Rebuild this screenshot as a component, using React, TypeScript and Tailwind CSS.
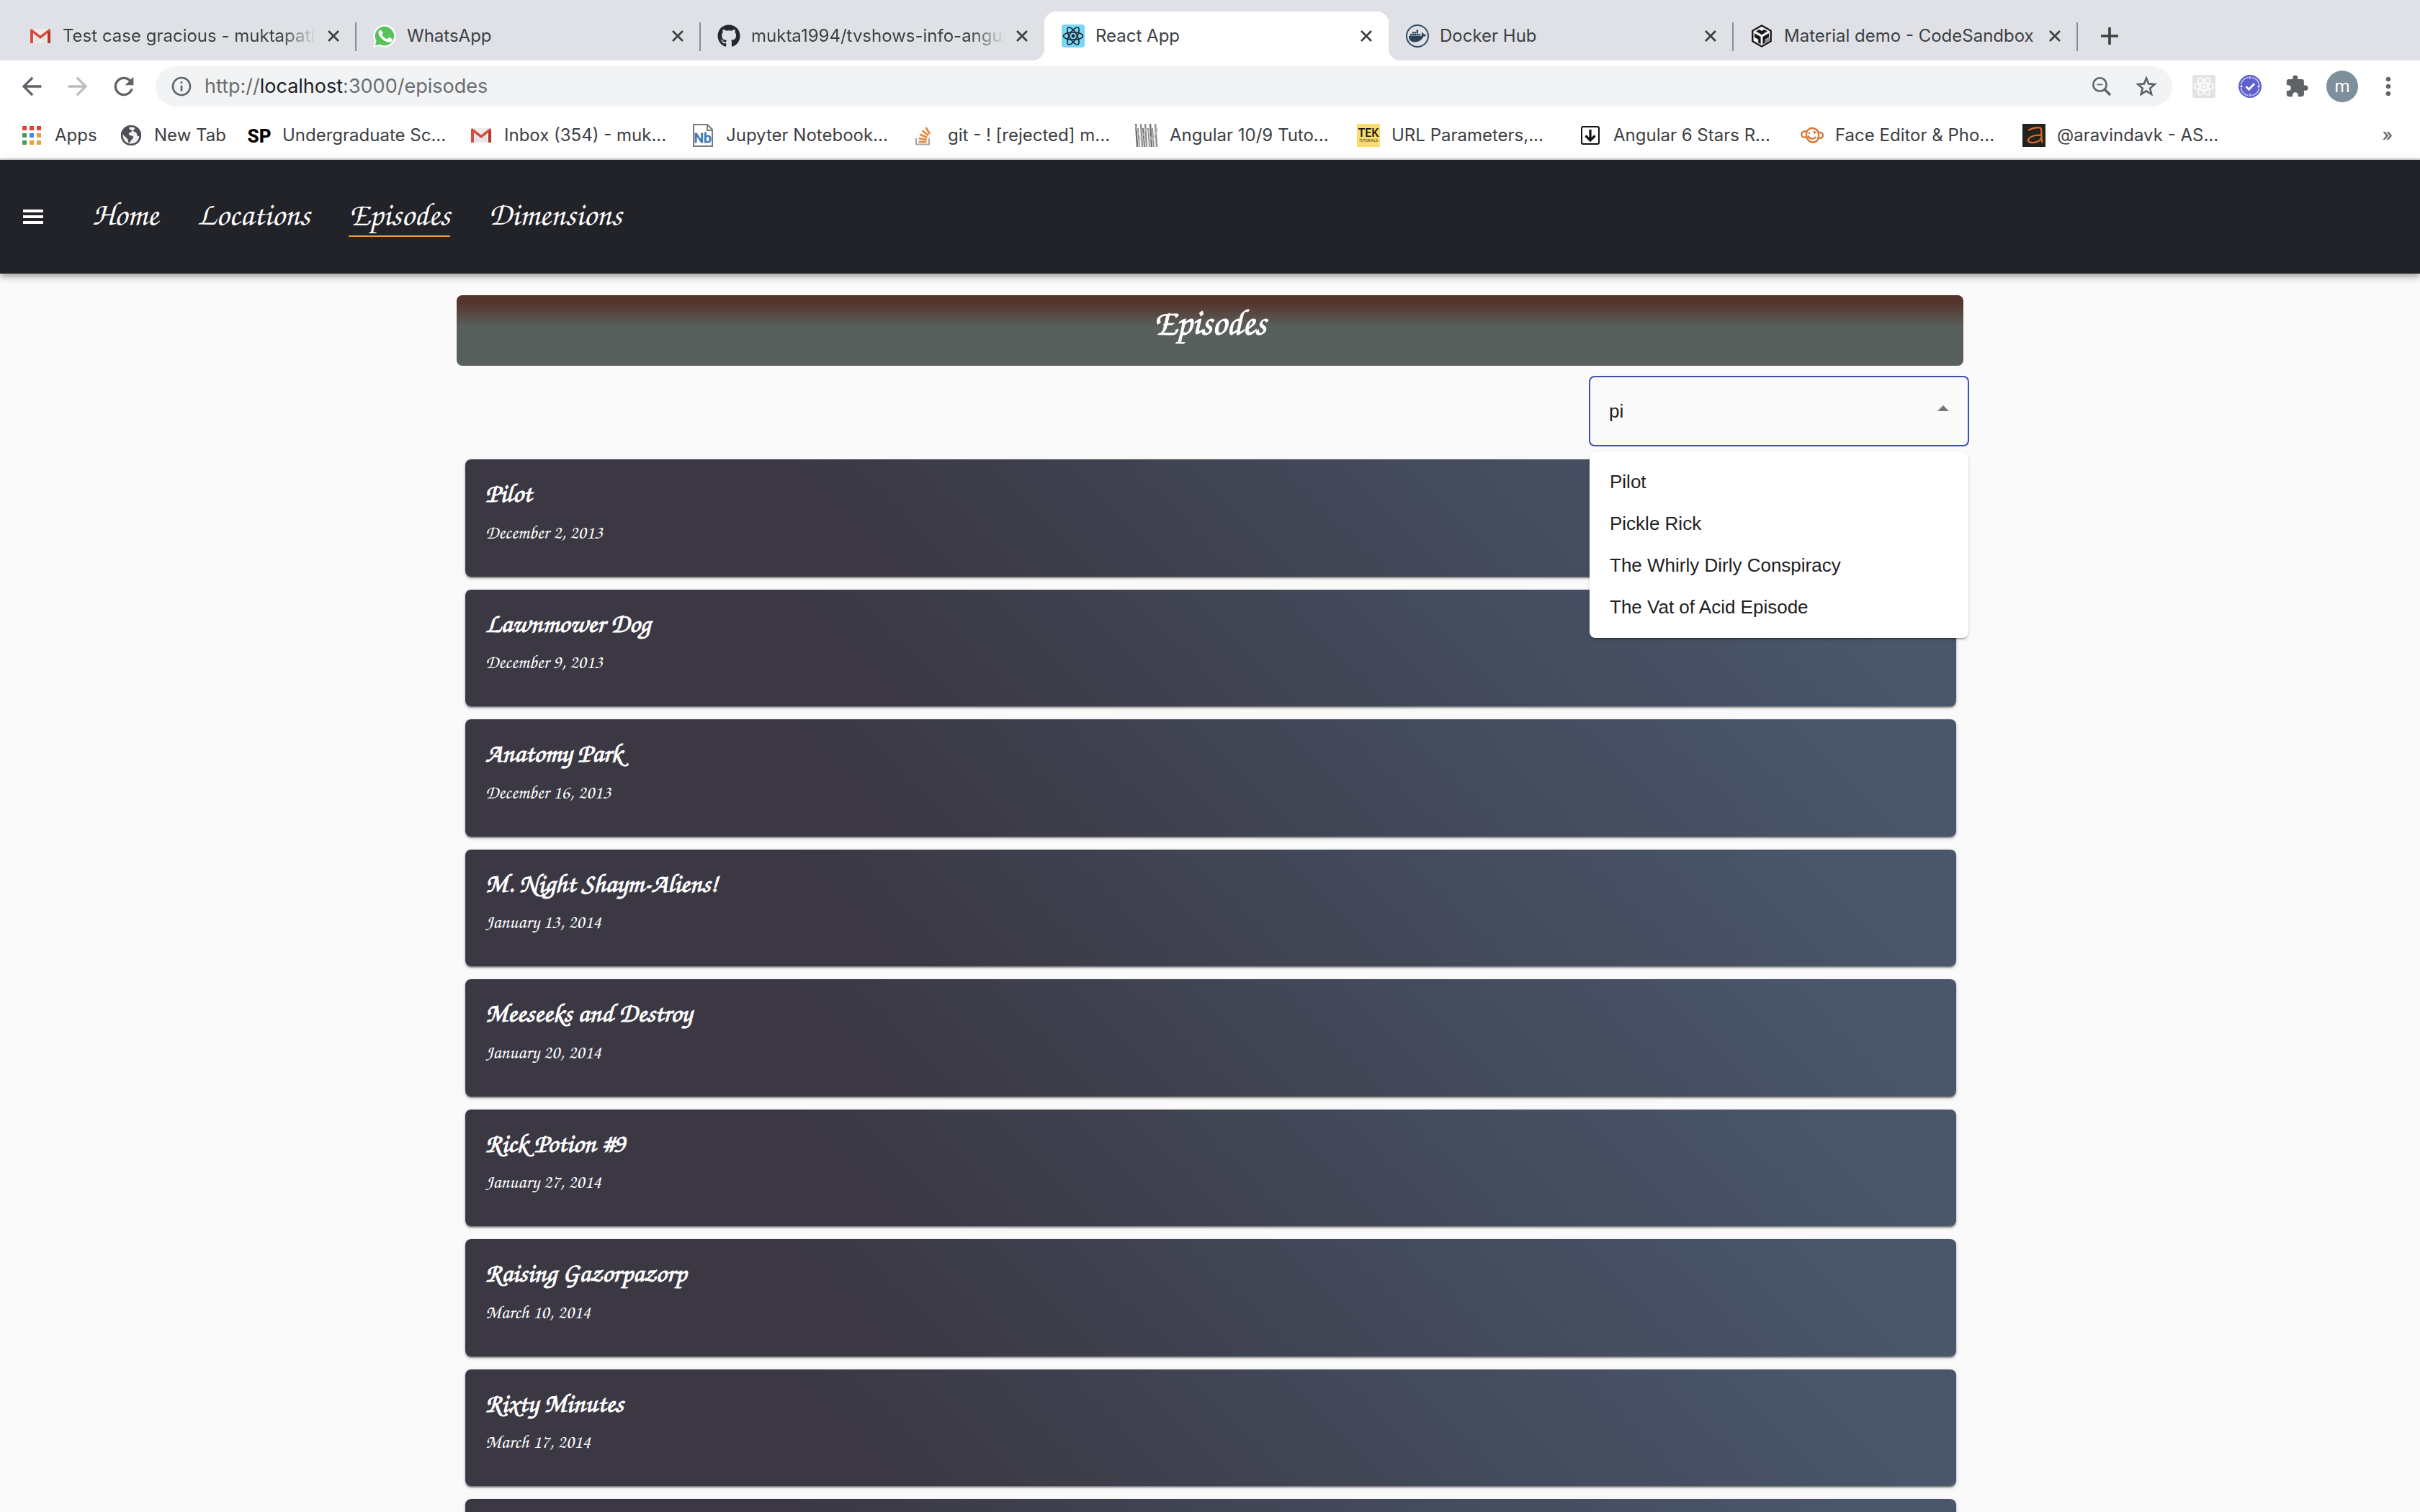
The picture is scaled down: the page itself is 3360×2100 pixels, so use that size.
import type { ReactNode } from "react";
import { FaDocker, FaGithub } from "react-icons/fa";
import {
  MdArrowBack,
  MdArrowForward,
  MdExtension,
  MdInfoOutline,
  MdMoreVert,
  MdRefresh,
} from "react-icons/md";

/* ---------- icons ---------- */

function GmailIcon() {
  return (
    <svg viewBox="0 0 32 32" className="size-8" aria-hidden="true">
      <path d="M4 6h24v20H4z" fill="#ececec" />
      <path d="M8 26 16 19l8 7z" fill="#fff" />
      <path d="M8 12v14h16V12l-8 7z" fill="#dcdcdc" opacity=".6" />
      <path d="M2 8.200a2 2 0 0 1 2-2L16 15.500 28 6.200a2 2 0 0 1 2 2V26h-4V12l-10 8L6 12v14H2z" fill="#d54b3d" />
      <path d="M26 12v14h4V8.200l-4 3.800z" fill="#b63524" />
    </svg>
  );
}

function WhatsAppIcon() {
  return (
    <svg viewBox="0 0 32 32" className="size-8" aria-hidden="true">
      <path d="M0 32 2.300 23.800A15.800 15.800 0 1 1 8.300 29.800z" fill="#fdfdfd" />
      <path d="M2.800 29.200 4.600 22.900A13.200 13.200 0 1 1 9.300 27.500z" fill="#55c25a" />
      <path
        d="M11.300 8.600c-.4-.8-.8-.8-1.200-.8-1 0-2.600 1.300-2.600 3.700 0 2.300 1.700 4.600 2 4.900.2.300 3.300 5.200 8.100 7.100 4 1.600 4.900 1.200 5.700 1.200.9-.1 2.900-1.200 3.200-2.300.4-1.200.4-2.100.3-2.300-.2-.3-.5-.4-1-.6l-3.200-1.500c-.5-.2-.8-.2-1.100.2l-1.500 1.900c-.3.300-.6.400-1 .1-.5-.2-2-.7-3.900-2.400-1.400-1.200-2.400-2.800-2.700-3.200-.2-.5 0-.7.300-1l1.200-1.500c.1-.3.200-.5.100-.9z"
        fill="#fff"
      />
    </svg>
  );
}

function Atom({ stroke, width }: { stroke: string; width: number }) {
  return (
    <g fill="none" stroke={stroke} strokeWidth={width}>
      <ellipse cx="16" cy="16" rx="13.500" ry="5.200" />
      <ellipse cx="16" cy="16" rx="13.500" ry="5.200" transform="rotate(60 16 16)" />
      <ellipse cx="16" cy="16" rx="13.500" ry="5.200" transform="rotate(120 16 16)" />
      <circle cx="16" cy="16" r="2.400" fill={stroke} stroke="none" />
    </g>
  );
}

function ReactIcon() {
  return (
    <svg viewBox="0 0 32 32" className="size-8" aria-hidden="true">
      <rect width="32" height="32" rx="4" fill="#7ad7f8" />
      <Atom stroke="#23272f" width={1.7} />
    </svg>
  );
}

function ReactToolsIcon() {
  return (
    <svg viewBox="0 0 32 32" className="size-8" aria-hidden="true">
      <rect width="32" height="32" rx="3" fill="#e3e3e3" />
      <Atom stroke="#fbfbfb" width={1.8} />
      <circle cx="16" cy="16" r="4.500" fill="none" stroke="#fbfbfb" strokeWidth="1.200" />
    </svg>
  );
}

function DockerIcon() {
  return (
    <span className="grid size-8 place-items-center rounded-full border-2 border-[#2f4a5f] text-[#2a4258]">
      <FaDocker className="size-6" aria-hidden="true" />
    </span>
  );
}

function CodeSandboxIcon() {
  return (
    <svg viewBox="0 0 32 32" className="size-8" aria-hidden="true">
      <path d="M16 1.500 28.700 8.800v14.400L16 30.500 3.300 23.200V8.800z" fill="#f4f4f4" stroke="#17181a" strokeWidth="2.400" strokeLinejoin="round" />
      <path d="M8 9.500 12.500 7l3.500 2 3.500-2L24 9.500l-8 4.700z" fill="#17181a" />
      <path d="M6 12.200 14.600 17v10.300l-3.400-2v-4.600L6 17.800z" fill="#17181a" />
      <path d="M26 12.200 17.400 17v10.300l3.400-2v-4.600l5.200-2.900z" fill="#17181a" />
      <path d="m20.800 21.500 6-3.500v4.500l-6 3.400z" fill="#8b8d90" />
    </svg>
  );
}

function AppsIcon() {
  const dots = ["#e34133", "#e34133", "#e34133", "#449c58", "#4285f4", "#e9a23b", "#449c58", "#e9a23b", "#e9a23b"];
  return (
    <svg viewBox="0 0 32 32" className="size-8" aria-hidden="true">
      {dots.map((fill, i) => (
        <rect key={i} x={3 + (i % 3) * 10} y={3 + Math.floor(i / 3) * 10} width="6" height="6" fill={fill} />
      ))}
    </svg>
  );
}

function GlobeIcon() {
  return (
    <svg viewBox="0 0 32 32" className="size-8" aria-hidden="true">
      <circle cx="16" cy="16" r="14" fill="#4e5156" />
      <path d="M13.500 4.500c-1 2 .5 3.500 2.500 4 2.500.6 1.500 2.500-.5 3-2.500.7-3 2-2.500 3.500.6 1.600 3.500 1 5 1.800 1.800 1 1.500 3-.2 4.200-1.600 1.100-2 2.500-3.300 4.500-.8 1.200-2.500 1-2.500-1 0-2.500-1-4-3-5.500S5.500 15.500 4.500 14c-1 5 1.500 12 9.500 14 8 1 13.500-5 14-11-2 .8-4-.5-4-2.500s-1.500-3-3.500-3.500-1.500-2.800 0-3.500 1-2.500-.5-3.200-5-1-6.500.2z" fill="#fff" opacity=".92" />
      <circle cx="16" cy="16" r="12.800" fill="none" stroke="#4e5156" strokeWidth="2.600" />
    </svg>
  );
}

function SpIcon() {
  return (
    <svg viewBox="0 0 32 32" className="size-8" aria-hidden="true">
      <text x="16" y="26" textAnchor="middle" fontFamily="Roboto, sans-serif" fontWeight="800" fontSize="26" fill="#000">
        SP
      </text>
    </svg>
  );
}

function NotebookIcon() {
  return (
    <svg viewBox="0 0 32 32" className="size-8" aria-hidden="true">
      <path d="M3 1h19l7 7v23H3z" fill="#fff" stroke="#7b7b7b" strokeWidth="2" />
      <path d="M22 1v8h7" fill="none" stroke="#7b7b7b" strokeWidth="2" />
      <text x="15.500" y="26" textAnchor="middle" fontFamily="Roboto, sans-serif" fontSize="19" fill="#3f78b0" stroke="#3f78b0">
        Nb
      </text>
    </svg>
  );
}

function StackOverflowIcon() {
  return (
    <svg viewBox="0 0 32 32" className="size-8" aria-hidden="true">
      <path d="M4 20v8.500h18V20" fill="none" stroke="#a0a4a8" strokeWidth="2" />
      <g stroke="#e8823a" strokeWidth="2.600">
        <path d="M7.500 25h11" />
        <path d="m7.800 20.200 11 1.800" />
        <path d="m9.200 14.800 10.200 4.200" />
        <path d="m12.500 9.300 8.500 7" />
        <path d="m17.500 5 5.500 9" />
      </g>
    </svg>
  );
}

function BarcodeIcon() {
  const bars = [2, 5, 9, 12, 15, 19, 22, 25, 29];
  return (
    <svg viewBox="0 0 32 32" className="size-8" aria-hidden="true">
      {bars.map((x, i) => (
        <path
          key={x}
          d={`M${x - 1} ${i % 2 ? 6 : 0}L${x + 1} 32`}
          stroke={i % 3 ? "#8e8e8e" : "#6b6b6b"}
          strokeWidth={i % 2 ? 1.8 : 2.4}
        />
      ))}
      <path d="M0 2 8 22 16 6l8 18 8-18" fill="none" stroke="#bdbdbd" strokeWidth="1.200" />
    </svg>
  );
}

function TekIcon() {
  return (
    <svg viewBox="0 0 32 32" className="size-8" aria-hidden="true">
      <rect width="32" height="32" fill="#f9dc6b" />
      <text x="16" y="18" textAnchor="middle" fontFamily="Roboto, sans-serif" fontWeight="500" fontSize="16" fill="#15130a">
        TEK
      </text>
      <text x="16" y="25" textAnchor="middle" fontFamily="Roboto, sans-serif" fontSize="5" fill="#3a351f">
        TUTORIALS
      </text>
    </svg>
  );
}

function DownloadBoxIcon() {
  return (
    <svg viewBox="0 0 32 32" className="size-8" aria-hidden="true">
      <rect x="4" y="4" width="24" height="24" rx="2" fill="#fff" stroke="#111" strokeWidth="2" />
      <path d="M16 8v14M9.500 16.500 16 23l6.500-6.500" fill="none" stroke="#111" strokeWidth="3.200" />
    </svg>
  );
}

function MonkeyIcon() {
  return (
    <svg viewBox="0 0 32 32" className="size-8" aria-hidden="true" fill="none" stroke="#d9783a" strokeWidth="2.400">
      <circle cx="5.500" cy="14.500" r="4.200" />
      <circle cx="27" cy="16" r="4" />
      <path d="M8 13C9 7 14 5 19 6.500S26 12 25 18s-4.500 8-9 7.500S7 20 8 13z" fill="#fff" />
      <path d="M10.500 16.500c1.500 4.500 7 6 11 1.500" />
      <path d="M12 11.500v2.500M18 10l3 2-3 1.500" strokeWidth="1.800" />
    </svg>
  );
}

function LetterAIcon() {
  return (
    <svg viewBox="0 0 32 32" className="size-8" aria-hidden="true">
      <rect width="32" height="32" fill="#20241c" />
      <path d="M9 8.500C15 5 24.500 4 26 7c1 3-.5 13 1.500 18.500M26 16c-7-1.500-18 2-18 7 0 5 16 4 18.500-4" fill="none" stroke="#e5682b" strokeWidth="2.200" strokeLinecap="round" />
    </svg>
  );
}

function CheckBadgeIcon() {
  return (
    <svg viewBox="0 0 32 32" className="size-8" aria-hidden="true">
      <circle cx="16" cy="16" r="16" fill="#5f60cb" />
      <circle cx="16" cy="16" r="12.800" fill="none" stroke="#dcdcf7" strokeWidth="1.300" strokeDasharray="15 5.100" strokeDashoffset="-2.600" />
      <g fill="#fff">
        <circle cx="4" cy="16" r="1.500" />
        <circle cx="28" cy="16" r="1.500" />
        <path d="M15.400 2h1.200v4h-1.200zM15.400 26h1.200v4h-1.200z" />
      </g>
      <path d="m10.500 16.300 4 4 7.500-8" fill="none" stroke="#fff" strokeWidth="2.800" />
    </svg>
  );
}

function CloseIcon() {
  return (
    <svg viewBox="0 0 18 18" className="size-[18px]" aria-hidden="true">
      <path d="M2 2l14 14M16 2L2 16" stroke="#3c4043" strokeWidth="2.800" />
    </svg>
  );
}

/* ---------- browser window ---------- */

type Tab = { title: string; icon: ReactNode; active?: boolean; divider?: boolean; fade?: boolean };

const tabs: Tab[] = [
  { title: "Test case gracious - muktapatil", icon: <GmailIcon />, divider: true, fade: true },
  { title: "WhatsApp", icon: <WhatsAppIcon />, divider: true },
  {
    title: "mukta1994/tvshows-info-angular",
    icon: <FaGithub className="size-8 text-[#24292e]" aria-hidden="true" />,
    fade: true,
  },
  { title: "React App", icon: <ReactIcon />, active: true },
  { title: "Docker Hub", icon: <DockerIcon />, divider: true },
  { title: "Material demo - CodeSandbox", icon: <CodeSandboxIcon />, divider: true },
];

function TabItem({ title, icon, active, divider, fade }: Tab) {
  return (
    <div
      className={`relative flex h-[68px] min-w-0 basis-[478px] items-center pr-[22px] pl-6 ${
        active ? "rounded-t-2xl bg-white" : ""
      }`}
    >
      {active && (
        <>
          <svg viewBox="0 0 16 16" className="absolute bottom-0 -left-4 size-4" aria-hidden="true">
            <path d="M16 0v16H0A16 16 0 0 0 16 0z" fill="#fff" />
          </svg>
          <svg viewBox="0 0 16 16" className="absolute -right-4 bottom-0 size-4" aria-hidden="true">
            <path d="M0 0v16h16A16 16 0 0 1 0 0z" fill="#fff" />
          </svg>
        </>
      )}
      <span className="shrink-0">{icon}</span>
      <button
        type="button"
        className={`ml-[15px] min-w-0 flex-1 overflow-hidden text-left whitespace-nowrap ${
          fade ? "mask-r-from-86%" : ""
        }`}
      >
        {title}
      </button>
      <button type="button" aria-label={`Close ${title}`} className="ml-3.5 shrink-0">
        <CloseIcon />
      </button>
      {divider && <span className="absolute top-[15px] -right-px h-10 w-0.5 bg-[#8a8d91]" />}
    </div>
  );
}

type Bookmark = { label: string; icon: ReactNode; width: string };

const bookmarks: Bookmark[] = [
  { label: "Apps", icon: <AppsIcon />, width: "w-[138px]" },
  { label: "New Tab", icon: <GlobeIcon />, width: "w-[178px]" },
  { label: "Undergraduate Sc...", icon: <SpIcon />, width: "w-[308px]" },
  { label: "Inbox (354) - muk...", icon: <GmailIcon />, width: "w-[308px]" },
  { label: "Jupyter Notebook...", icon: <NotebookIcon />, width: "w-[308px]" },
  { label: "git - ! [rejected] m...", icon: <StackOverflowIcon />, width: "w-[308px]" },
  { label: "Angular 10/9 Tuto...", icon: <BarcodeIcon />, width: "w-[308px]" },
  { label: "URL Parameters,...", icon: <TekIcon />, width: "w-[308px]" },
  { label: "Angular 6 Stars R...", icon: <DownloadBoxIcon />, width: "w-[308px]" },
  { label: "Face Editor & Pho...", icon: <MonkeyIcon />, width: "w-[308px]" },
  { label: "@aravindavk - AS...", icon: <LetterAIcon />, width: "w-[308px]" },
];

function BrowserChrome() {
  return (
    <header className="font-[Inter,sans-serif] text-2xl text-[#3c4043]">
      <div className="flex items-end bg-[#dfe1e6] pt-4 pl-4">
        {tabs.map((tab) => (
          <TabItem key={tab.title} {...tab} />
        ))}
        <button type="button" aria-label="New tab" className="ml-8 flex h-[68px] items-center">
          <svg viewBox="0 0 26 26" className="size-[26px]" aria-hidden="true">
            <path d="M13 1v24M1 13h24" stroke="#3c4043" strokeWidth="3.600" />
          </svg>
        </button>
      </div>

      <div className="flex items-center bg-white py-2 pr-6 pl-6 text-[#5f6368]">
        <button type="button" aria-label="Back" className="mr-6">
          <MdArrowBack className="size-10" />
        </button>
        <button type="button" aria-label="Forward" className="mr-6 text-[#babcbe]">
          <MdArrowForward className="size-10" />
        </button>
        <button type="button" aria-label="Reload" className="mr-6">
          <MdRefresh className="size-10" />
        </button>
        <div className="flex h-14 flex-1 items-center rounded-full bg-[#f1f3f4] px-5">
          <MdInfoOutline className="size-8" aria-hidden="true" />
          <a href="http://localhost:3000/episodes" className="ml-4 flex-1 text-[27px] text-[#696d71]">
            http://<span className="text-[#202124]">localhost</span>:3000/episodes
          </a>
          <button type="button" aria-label="Zoom out">
            <svg viewBox="0 0 28 28" className="size-7" fill="none" stroke="#5f6368" strokeWidth="2.600" aria-hidden="true">
              <circle cx="11.500" cy="11.500" r="9.200" />
              <path d="m18 18 8 8" strokeWidth="3.400" />
              <path d="M7.500 11.500h8" strokeWidth="1.600" />
            </svg>
          </button>
          <button type="button" aria-label="Bookmark this page" className="ml-8">
            <svg viewBox="0 0 32 32" className="size-8" fill="none" stroke="#5f6368" strokeWidth="2.600" aria-hidden="true">
              <path d="m16 4.500 3.200 7.900 8.500.7-6.500 5.500 2 8.300-7.200-4.500-7.200 4.500 2-8.300-6.500-5.500 8.500-.7z" />
            </svg>
          </button>
        </div>
        <button type="button" aria-label="React Developer Tools" className="ml-7">
          <ReactToolsIcon />
        </button>
        <button type="button" aria-label="Clockify" className="ml-8">
          <CheckBadgeIcon />
        </button>
        <button type="button" aria-label="Extensions" className="ml-8">
          <MdExtension className="size-[34px]" />
        </button>
        <button
          type="button"
          aria-label="Profile"
          className="ml-6 grid size-11 place-items-center rounded-full bg-[#7d909c] font-[Roboto,sans-serif] text-2xl leading-none text-white"
        >
          m
        </button>
        <button type="button" aria-label="Menu" className="ml-[22px]">
          <MdMoreVert className="size-10" />
        </button>
      </div>

      <nav
        aria-label="Bookmarks"
        className="flex h-[66px] items-center border-b-2 border-[#d6dadd] bg-white pr-[38px] pl-7"
      >
        {bookmarks.map(({ label, icon, width }) => (
          <a key={label} href="#bookmark" className={`flex min-w-0 items-center gap-4 whitespace-nowrap ${width}`}>
            <span className="shrink-0">{icon}</span>
            {label}
          </a>
        ))}
        <button type="button" className="ml-auto font-medium text-[#5f6368]">
          »
        </button>
      </nav>
    </header>
  );
}

/* ---------- page ---------- */

const navLinks = ["Home", "Locations", "Episodes", "Dimensions"];

const episodes = [
  { name: "Pilot", date: "December 2, 2013" },
  { name: "Lawnmower Dog", date: "December 9, 2013" },
  { name: "Anatomy Park", date: "December 16, 2013" },
  { name: "M. Night Shaym-Aliens!", date: "January 13, 2014" },
  { name: "Meeseeks and Destroy", date: "January 20, 2014" },
  { name: "Rick Potion #9", date: "January 27, 2014" },
  { name: "Raising Gazorpazorp", date: "March 10, 2014" },
  { name: "Rixty Minutes", date: "March 17, 2014" },
  { name: "Something Ricked This Way Comes", date: "March 24, 2014" },
];

const suggestions = ["Pilot", "Pickle Rick", "The Whirly Dirly Conspiracy", "The Vat of Acid Episode"];

function AppBar() {
  return (
    <div className="relative z-10 flex h-[158px] items-center bg-[#222328] pl-8 text-white shadow-[0_3px_6px_-1px_rgba(0,0,0,0.2),0_6px_8px_rgba(0,0,0,0.14),0_2px_16px_rgba(0,0,0,0.12)]">
      <button type="button" aria-label="Open menu" className="grid gap-1">
        <span className="h-1 w-7 bg-white" />
        <span className="h-1 w-7 bg-white" />
        <span className="h-1 w-7 bg-white" />
      </button>
      <nav aria-label="Main" className="ml-[68px] flex gap-[54px] text-[45px] leading-[46px]">
        {navLinks.map((link) => (
          <a
            key={link}
            href={`#${link.toLowerCase()}`}
            className={link === "Episodes" ? "border-b-2 border-[#f79a32] pb-2" : "border-b-2 border-transparent pb-2"}
          >
            {link}
          </a>
        ))}
      </nav>
    </div>
  );
}

function EpisodeSearch() {
  return (
    <div className="relative z-10 mt-3.5 -mr-2 w-[528px] self-end font-['Liberation_Sans',Arial,sans-serif] text-[26px] text-[#212121]">
      <div className="flex h-[98px] items-center rounded-lg border-2 border-[#3f51b5] pr-6 pl-[26px]">
        <input
          type="text"
          role="combobox"
          aria-label="Search episodes"
          aria-expanded="true"
          aria-controls="episode-options"
          defaultValue="pi"
          className="min-w-0 flex-1 bg-transparent outline-none"
        />
        <button type="button" aria-label="Close suggestions" className="pb-2">
          <svg viewBox="0 0 20 8" className="h-2 w-5" aria-hidden="true">
            <path d="M2 8 10 0l8 8z" fill="#757575" />
          </svg>
        </button>
      </div>
      <ul
        id="episode-options"
        role="listbox"
        aria-label="Episodes"
        className="absolute inset-x-px top-full mt-2 rounded-lg bg-white pt-3 pb-3.5 shadow-[0_3px_2px_-2px_rgba(0,0,0,0.2),0_2px_2px_rgba(0,0,0,0.14),0_2px_5px_rgba(0,0,0,0.12)]"
      >
        {suggestions.map((name) => (
          <li key={name} role="option" aria-selected="false" className="px-7 leading-[58px]">
            {name}
          </li>
        ))}
      </ul>
    </div>
  );
}

export default function App() {
  return (
    <div className="flex h-screen flex-col overflow-hidden bg-[#fafafa]">
      <BrowserChrome />
      <div className="flex min-h-0 flex-1 flex-col font-['Apple_Chancery','TeX_Gyre_Chorus','Liberation_Serif',cursive]">
        <AppBar />
        <main className="mx-auto flex min-h-0 w-full max-w-[2092px] flex-1 flex-col">
          <h1 className="mt-[30px] rounded-lg bg-linear-to-b from-[#54342d] from-10% to-[#57605c] to-45% pb-[26px] text-center text-[50px] leading-[72px] font-bold text-white [-webkit-text-stroke:1px_white]">
            Episodes
          </h1>
          <EpisodeSearch />
          <ul className="mt-[18px] mr-2.5 ml-3 flex flex-col gap-[18px]">
            {episodes.map(({ name, date }) => (
              <li
                key={name}
                className="rounded-lg bg-linear-45 from-[#3b3844] from-28% via-[#434a5b] via-64% to-[#4a566a] to-92% px-7 pt-[18px] pb-[45px] text-white shadow-[0_3px_2px_-2px_rgba(0,0,0,0.3),0_2px_2px_rgba(0,0,0,0.24),0_2px_5px_rgba(0,0,0,0.2)]"
              >
                <h2 className="text-[37px] leading-normal font-bold [-webkit-text-stroke:1px_white]">{name}</h2>
                <p className="mt-2 text-[26px] leading-9">{date}</p>
              </li>
            ))}
          </ul>
        </main>
      </div>
    </div>
  );
}
